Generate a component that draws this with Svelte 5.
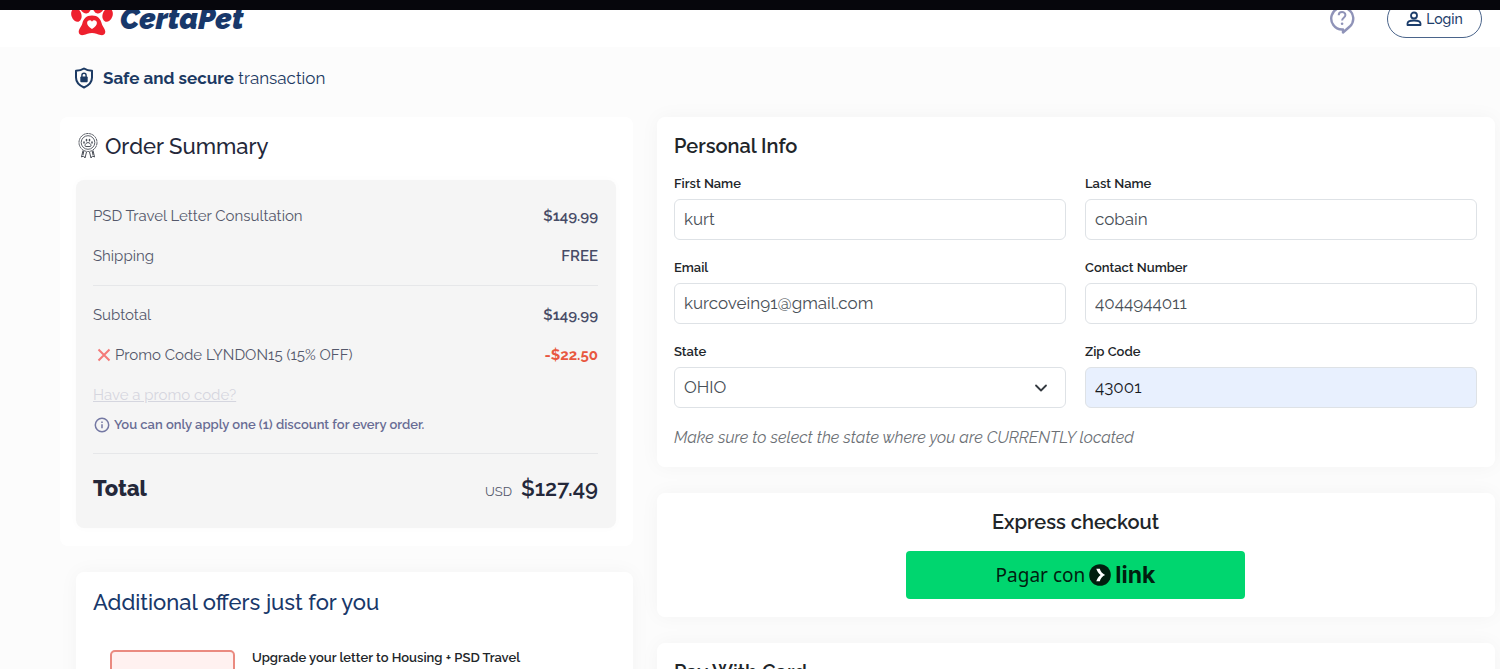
<script lang="ts">
	interface Field {
		id: string;
		label: string;
		type: string;
		value: string;
	}

	let contact = $state<Field[]>([
		{ id: 'first-name', label: 'First Name', type: 'text', value: 'kurt' },
		{ id: 'last-name', label: 'Last Name', type: 'text', value: 'cobain' },
		{ id: 'email', label: 'Email', type: 'email', value: 'kurcovein91@gmail.com' },
		{ id: 'phone', label: 'Contact Number', type: 'tel', value: '4044944011' }
	]);
	let usState = $state('OHIO');
	let zip = $state('43001');
</script>

<div class="page">
	<div class="topbar"></div>
	<header>
		<a class="logo" href="/">
			<svg width="42" height="36" viewBox="0 0 42 36" aria-hidden="true">
				<g fill="#ee202e">
					<ellipse cx="14.5" cy="6" rx="5.600" ry="7.600" transform="rotate(-8 14.5 6)" />
					<ellipse cx="27.5" cy="6" rx="5.600" ry="7.600" transform="rotate(8 27.5 6)" />
					<ellipse cx="5.400" cy="15" rx="5" ry="7" transform="rotate(-18 5.4 15)" />
					<ellipse cx="36.600" cy="15" rx="5" ry="7" transform="rotate(18 36.6 15)" />
					<path d="M21 15.500c6 0 8.500 3.500 9.700 8 .9 3.400 3.600 5.300 3.600 8.300 0 2.500-2 3.700-4.700 3.300-3-.4-5.300-2-8.600-2s-5.600 1.600-8.600 2c-2.700.4-4.700-.8-4.700-3.300 0-3 2.700-4.900 3.600-8.300C12.500 19 15 15.500 21 15.500z" />
				</g>
				<path fill="#fff" d="M21 29c-3.200-2.300-4.900-3.900-4.900-6 0-2.900 3.500-3.800 4.900-1.300 1.400-2.500 4.900-1.600 4.900 1.300 0 2.100-1.700 3.700-4.900 6z" />
			</svg>
			<span>CertaPet</span>
		</a>
		<nav>
			<a class="help" href="#help" aria-label="Help">
				<svg width="26" height="30" viewBox="0 0 26 30" fill="none" stroke="#8f93b8" stroke-width="2.400">
					<path d="M13 25.500A11 11 0 1 1 20.800 22.500L14 28.500v-3z" stroke-linejoin="round" />
					<path d="M9.700 11.300c0-4.500 6.700-4.300 6.700-.3 0 2.800-3.300 2.700-3.300 5.500" stroke-width="2" />
					<circle cx="13.100" cy="19.800" r="1.300" fill="#8f93b8" stroke="none" />
				</svg>
			</a>
			<button class="login" type="button">
				<svg width="16" height="16" viewBox="0 0 16 16" fill="none" stroke="#1c3d6b" stroke-width="1.800" aria-hidden="true">
					<circle cx="8" cy="4.500" r="3" />
					<path d="M1.500 14v-1.500c0-2 3-3 6.500-3s6.500 1 6.500 3V14z" stroke-linejoin="round" />
				</svg>
				Login
			</button>
		</nav>
	</header>

	<p class="secure">
		<svg width="20" height="22" viewBox="0 0 20 22" aria-hidden="true">
			<path d="M10 1.500c2.500 1.800 5 2.300 8 2.300v6.700c0 5-3.400 8-8 10-4.600-2-8-5-8-10V3.800c3 0 5.500-.5 8-2.300z" fill="none" stroke="#1c3a63" stroke-width="2" stroke-linejoin="round" />
			<rect x="6.300" y="9.600" width="7.400" height="5.600" rx="1" fill="#1c3a63" />
			<path d="M7.900 10V8.400a2.100 2.100 0 0 1 4.200 0V10" fill="none" stroke="#1c3a63" stroke-width="1.400" />
		</svg>
		<span><strong>Safe and secure</strong> transaction</span>
	</p>

	<main>
		<div class="column">
			<section class="order">
				<h2>
					<svg width="20" height="26" viewBox="0 0 20 26" fill="none" stroke="#4a4e57" aria-hidden="true">
						<circle cx="10" cy="9.500" r="9" stroke-width="1" stroke-dasharray="2.500 .6" />
						<circle cx="10" cy="9.500" r="6.800" stroke-width=".9" />
						<path d="M7 12.500c0-1.500 1.600-2.900 3-2.900s3 1.400 3 2.900c0 1.400-1.700 1-3 1s-3 .4-3-1z" />
						<path d="M6 9v1M8.500 6.500v1.200M11.500 6.500v1.200M14 9v1" stroke-width="1.500" stroke-linecap="round" />
						<path d="M5 17.500 3.500 24l2-1 1.500 2 1.500-6M15 17.500l1.500 6.500-2-1-1.500 2-1.500-6M5.800 18l-.8 4M14.200 18l.8 4" />
					</svg>
					Order Summary
				</h2>
				<div class="summary">
					<div class="row"><span>PSD Travel Letter Consultation</span><b>$149.99</b></div>
					<div class="row"><span>Shipping</span><b>FREE</b></div>
					<hr />
					<div class="row"><span>Subtotal</span><b>$149.99</b></div>
					<div class="row">
						<span class="promo">
							<button type="button" aria-label="Remove promo code">
								<svg width="14" height="14" viewBox="0 0 14 14" stroke="#f47a78" stroke-width="2">
									<path d="M1.500 1.500l11 11M12.500 1.500l-11 11" />
								</svg>
							</button>
							Promo Code LYNDON15 (15% OFF)
						</span>
						<b class="discount">-$22.50</b>
					</div>
					<div class="row"><a class="have-code" href="#promo">Have a promo code?</a></div>
					<p class="note">
						<svg width="16" height="16" viewBox="0 0 16 16" fill="none" stroke="#7478a3" stroke-width="1.500" aria-hidden="true">
							<circle cx="8" cy="8" r="6.700" />
							<path d="M8 7.200v4M8 4.500v1.500" />
						</svg>
						You can only apply one (1) discount for every order.
					</p>
					<hr class="last" />
					<div class="row total">
						<span>Total</span>
						<span class="amount"><small>USD</small>$127.49</span>
					</div>
				</div>
			</section>

			<section class="card offers">
				<h2>Additional offers just for you</h2>
				<div class="offer">
					<div class="offer-box"></div>
					<p>Upgrade your letter to Housing + PSD Travel</p>
				</div>
			</section>
		</div>

		<div class="column">
			<section class="card">
				<h3>Personal Info</h3>
				<form>
					{#each contact as field (field.id)}
						<div class="field">
							<label for={field.id}>{field.label}</label>
							<input id={field.id} type={field.type} bind:value={field.value} />
						</div>
					{/each}
					<div class="field">
						<label for="state">State</label>
						<div class="select">
							<select id="state" bind:value={usState}>
								<option>OHIO</option>
							</select>
							<svg width="14" height="14" viewBox="0 0 14 14" fill="none" stroke="#343a40" stroke-width="1.800" stroke-linecap="round" stroke-linejoin="round" aria-hidden="true">
								<path d="M2 4.500l5 5 5-5" />
							</svg>
						</div>
					</div>
					<div class="field">
						<label for="zip">Zip Code</label>
						<input id="zip" class="autofilled" type="text" bind:value={zip} />
					</div>
				</form>
				<p class="hint">Make sure to select the state where you are CURRENTLY located</p>
			</section>

			<section class="card express">
				<h3>Express checkout</h3>
				<button class="pay-link" type="button">
					<span>Pagar con</span>
					<svg width="22" height="22" viewBox="0 0 22 22" aria-hidden="true">
						<circle cx="11" cy="11" r="10.800" fill="#011e0f" />
						<path d="M7.300 4.800h3.500c.7 2.700 2.700 5 5.300 6.200-2.600 1.200-4.600 3.500-5.300 6.200H7.300c.8-2.500 2.300-4.700 4.300-6.200-2-1.500-3.500-3.700-4.300-6.200z" fill="#fff" />
					</svg>
					<strong>link</strong>
				</button>
			</section>

			<section class="card">
				<h3>Pay With Card</h3>
			</section>
		</div>
	</main>
</div>

<style>
	:global(body) {
		margin: 0;
		background: #fcfcfc;
	}

	.page {
		height: 100vh;
		overflow: hidden;
		font-family: Raleway, Lato, 'Open Sans', sans-serif;
		font-size: 15px;
		color: #212529;
	}

	h2,
	h3,
	p {
		margin: 0;
	}
	h2 {
		font-size: 22px;
		line-height: 30px;
		font-weight: 500;
	}
	h3 {
		font-size: 20px;
		line-height: 30px;
		font-weight: 600;
	}
	button,
	input,
	select {
		font: inherit;
	}

	.topbar {
		height: 10px;
		background: #06060c;
	}

	header {
		display: flex;
		justify-content: space-between;
		align-items: flex-end;
		height: 37px;
		padding: 0 18px 0 71px;
		box-sizing: border-box;
		background: #fff;
		overflow: hidden;
	}
	.logo {
		display: flex;
		align-items: flex-end;
		gap: 7px;
		padding-bottom: 11px;
		color: #18386a;
		font-size: 29px;
		line-height: 34px;
		font-weight: 900;
		font-style: italic;
		text-decoration: none;
	}
	nav {
		display: flex;
		align-items: flex-end;
		gap: 32px;
		padding-bottom: 9px;
	}
	.help {
		display: flex;
		padding-bottom: 4px;
	}
	.login {
		display: flex;
		align-items: center;
		justify-content: center;
		gap: 4px;
		width: 95px;
		height: 38px;
		padding: 0;
		border: 1px solid #4a648a;
		border-radius: 19px;
		background: #fff;
		color: #1c3d6b;
		font-size: 14px;
		font-weight: 500;
	}

	.secure {
		display: flex;
		align-items: center;
		gap: 9px;
		padding: 18px 0 26px 74px;
		color: #1c3a63;
		font-size: 17px;
		line-height: 26px;
	}

	main {
		display: grid;
		grid-template-columns: 573fr 838fr;
		align-items: start;
		gap: 24px;
		padding: 0 5px 0 60px;
	}
	.column {
		display: flex;
		flex-direction: column;
		gap: 26px;
	}

	.card {
		padding: 14px 18px 19px 17px;
		border-radius: 8px;
		background: #fff;
		box-shadow: 0 0 20px rgba(0, 0, 0, 0.04);
	}

	.order {
		padding: 14px 17px 18px 16px;
		border-radius: 8px;
		background: #fff;
	}
	.order h2 {
		display: flex;
		align-items: center;
		gap: 7px;
		padding-left: 2px;
		color: #24283a;
	}
	.summary {
		margin-top: 19px;
		padding: 16px 18px 20px 17px;
		border-radius: 8px;
		background: #f5f5f5;
		box-shadow: 0 0 10px rgba(0, 0, 0, 0.02);
		color: #54586b;
	}
	.row {
		display: flex;
		justify-content: space-between;
		align-items: center;
		height: 40px;
	}
	.row b {
		color: #474b66;
		font-weight: 600;
	}
	.row .discount {
		color: #e8573f;
		font-weight: 700;
	}
	hr {
		height: 1px;
		margin: 9px 0;
		border: 0;
		background: #e6e7e9;
	}
	hr.last {
		margin: 18px 0 14px;
	}
	.promo {
		display: flex;
		align-items: center;
		gap: 4px;
		padding-left: 4px;
	}
	.promo button {
		display: flex;
		padding: 0;
		border: 0;
		background: none;
	}
	.have-code {
		color: #d5d6df;
	}
	.note {
		display: flex;
		align-items: center;
		gap: 4px;
		padding-left: 1px;
		color: #686c94;
		font-size: 13px;
		line-height: 20px;
		font-weight: 600;
	}
	.total {
		color: #24283a;
		font-size: 22px;
		font-weight: 800;
	}
	.amount {
		display: flex;
		align-items: baseline;
		gap: 9px;
		font-weight: 600;
	}
	.amount small {
		color: #54586b;
		font-size: 13px;
		font-weight: 400;
	}

	.offers {
		margin-left: 16px;
		padding-top: 15px;
	}
	.offers h2 {
		color: #18386a;
	}
	.offer {
		display: flex;
		gap: 17px;
		padding: 33px 0 0 17px;
	}
	.offer-box {
		width: 121px;
		height: 90px;
		border: 2px solid #ea8a80;
		border-radius: 5px;
		background: #fff1f0;
	}
	.offer p {
		font-size: 13px;
		line-height: 16px;
		font-weight: 600;
	}

	form {
		display: grid;
		grid-template-columns: 1fr 1fr;
		gap: 18px 19px;
		margin-top: 13px;
	}
	.field {
		display: flex;
		flex-direction: column;
		gap: 5px;
	}
	label {
		font-size: 13px;
		line-height: 20px;
		font-weight: 600;
	}
	input,
	select {
		box-sizing: border-box;
		width: 100%;
		height: 41px;
		padding: 0 9px 2px;
		border: 1px solid #dee2e6;
		border-radius: 6px;
		background: #fff;
		color: #495057;
		font-size: 17px;
	}
	.autofilled {
		background: #e8f0fe;
		color: #16191d;
	}
	.select {
		display: grid;
		align-items: center;
	}
	.select > * {
		grid-area: 1 / 1;
	}
	select {
		appearance: none;
	}
	.select svg {
		justify-self: end;
		margin-right: 18px;
		pointer-events: none;
	}
	.hint {
		margin-top: 20px;
		color: #6c7075;
		font-size: 16px;
		line-height: 20px;
		font-style: italic;
	}

	.express {
		display: flex;
		flex-direction: column;
		align-items: center;
		gap: 14px;
		padding-bottom: 18px;
	}
	.pay-link {
		display: flex;
		justify-content: center;
		align-items: center;
		gap: 4px;
		width: 100%;
		max-width: 339px;
		height: 48px;
		padding: 0;
		border: 0;
		border-radius: 4px;
		background: #00d66f;
		color: #011e0f;
		font-family: 'Noto Sans', 'Open Sans', sans-serif;
		font-size: 19px;
	}
	.pay-link strong {
		font-family: Inter, sans-serif;
		font-size: 23px;
		font-weight: 700;
	}
</style>
